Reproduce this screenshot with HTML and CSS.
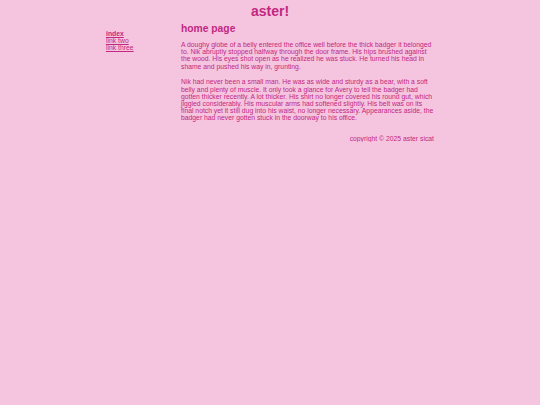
FILE: index.html
```html
<!DOCTYPE html>
<html>
<head>
<meta charset="utf-8">
<link rel="stylesheet" href="styles.css">
</head>
<body>
<h1 class="site-title">aster!</h1>
<div class="wrap">
  <nav class="nav">
    <a href="#" class="current">index</a>
    <a href="#">link two</a>
    <a href="#">link three</a>
  </nav>
  <main class="main">
    <h2 class="page-title">home page</h2>
    <p>A doughy globe of a belly entered the office well before the thick badger it belonged to. Nik abruptly stopped halfway through the door frame. His hips brushed against the wood. His eyes shot open as he realized he was stuck. He turned his head in shame and pushed his way in, grunting.</p>
    <p>Nik had never been a small man. He was as wide and sturdy as a bear, with a soft belly and plenty of muscle. It only took a glance for Avery to tell the badger had gotten thicker recently. A lot thicker. His shirt no longer covered his round gut, which jiggled considerably. His muscular arms had softened slightly. His belt was on its final notch yet it still dug into his waist, no longer necessary. Appearances aside, the badger had never gotten stuck in the doorway to his office.</p>
    <footer class="footer">copyright © 2025 aster sicat</footer>
  </main>
</div>
</body>
</html>
```
FILE: styles.css
```css
html, body {
  margin: 0;
  padding: 0;
  background: #f5c5df;
}
body {
  font-family: "Liberation Sans", Arial, sans-serif;
  color: #c2287f;
  font-size: 6.8px;
  line-height: 7.2px;
}
.site-title {
  margin: 0;
  padding-top: 3px;
  text-align: center;
  font-size: 14px;
  line-height: 16px;
  font-weight: bold;
}
.wrap {
  width: 328px;
  margin: 0 auto;
  display: flex;
}
.nav {
  width: 75px;
  flex: none;
  display: flex;
  flex-direction: column;
  padding-top: 11px;
  line-height: 7.1px;
}
.nav a {
  color: #c2287f;
  text-decoration: underline;
}
.nav a.current {
  font-weight: bold;
}
.main {
  flex: 1;
}
.page-title {
  margin: 4px 0 6px;
  font-size: 10.3px;
  line-height: 12px;
  font-weight: bold;
}
.main p {
  margin: 0 0 8.5px;
}
.footer {
  text-align: right;
  margin-top: 13px;
}
```
